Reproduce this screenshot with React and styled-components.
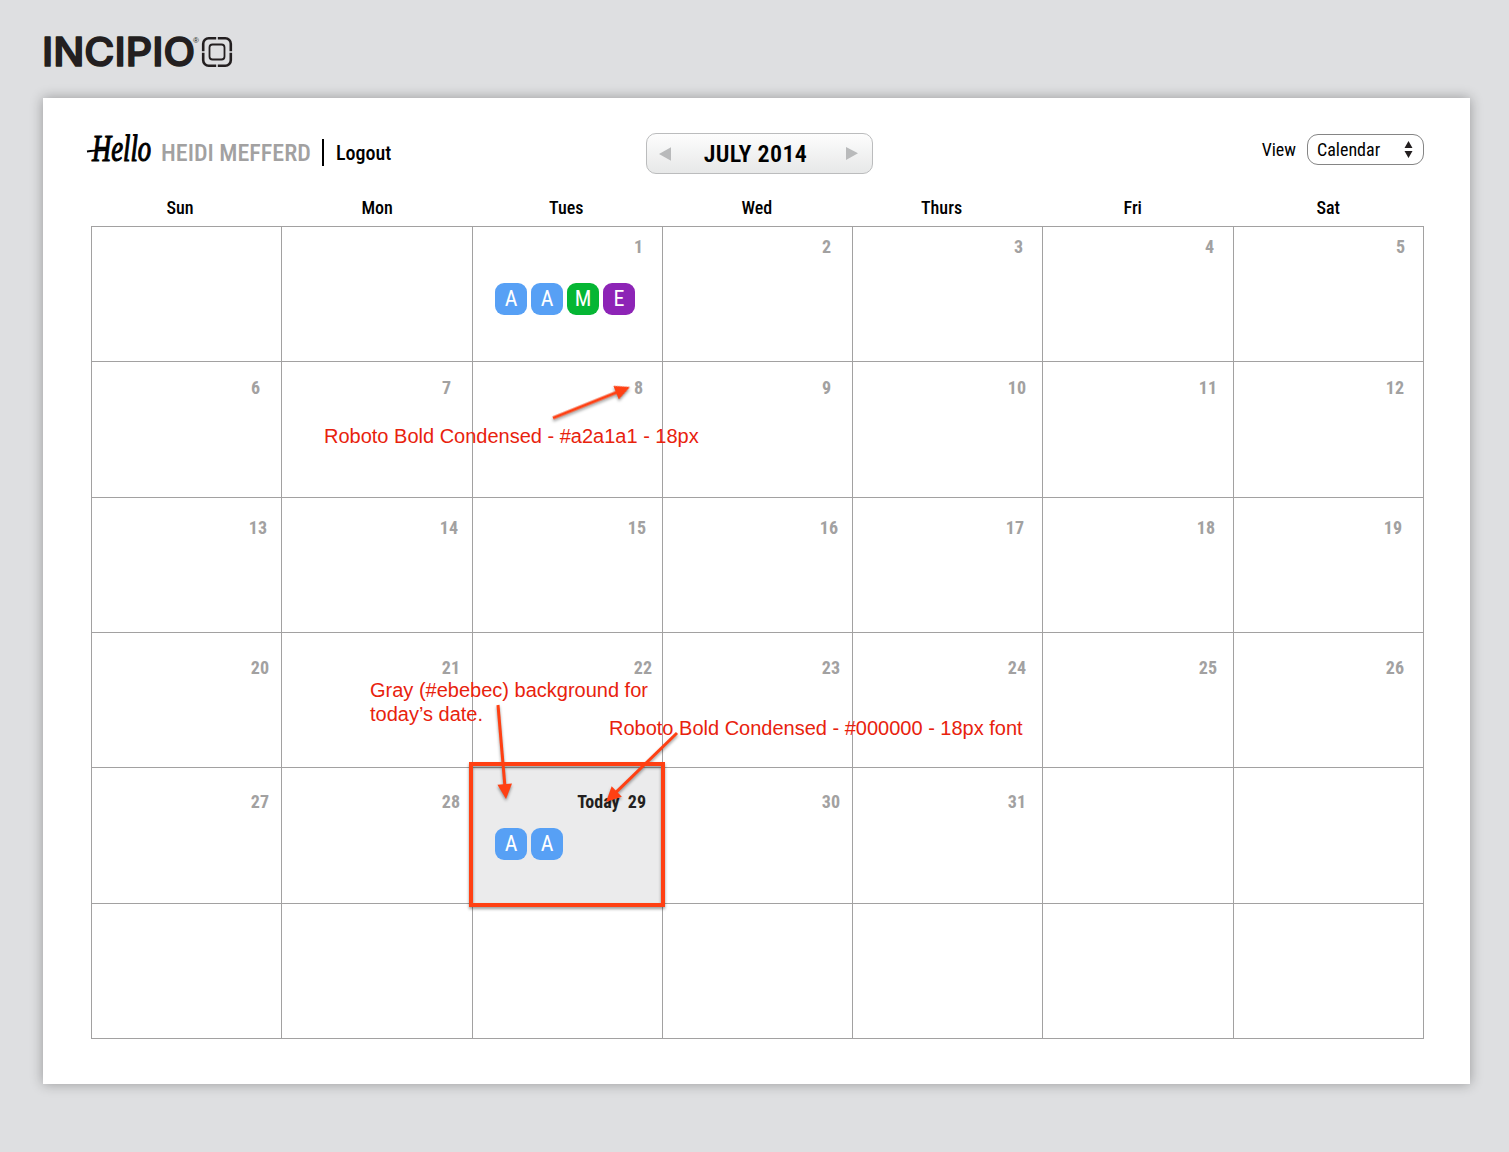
import React from 'react';
import styled, { createGlobalStyle } from 'styled-components';

const Global = createGlobalStyle`
  * { box-sizing: border-box; }
  body {
    margin: 0;
    background: #dedfe1;
    color: #000;
    font-family: "Roboto Condensed", Roboto, sans-serif;
    font-stretch: 75%;
  }
`;

const Page = styled.div`
  position: relative;
  width: 1509px;
  height: 1152px;
  padding: 36px 39px 68px 43px;
  overflow: hidden;
`;

const Brand = styled.header`
  height: 62px;
`;

const LogoMark = styled.svg`
  display: block;
  overflow: visible;
`;

const Panel = styled.main`
  width: 1427px;
  height: 986px;
  padding: 35px 46px 45px 44px;
  background: #fff;
  box-shadow: 0 0 12px rgba(0, 0, 0, 0.32);
`;

const TopBar = styled.div`
  display: grid;
  grid-template-columns: 559px 227px 1fr;
  height: 60px;
`;

const Greeting = styled.div`
  display: flex;
  align-items: flex-start;
`;

const Hello = styled.svg`
  width: 74px;
  height: 40px;
  overflow: visible;
`;

const UserName = styled.span`
  width: 161px;
  line-height: 40px;
  font-size: 24px;
  font-weight: 500;
  color: #a2a1a1;
  white-space: nowrap;
`;

const Logout = styled.a`
  height: 27px;
  margin-top: 6px;
  padding-left: 12px;
  border-left: 2px solid #000;
  font-size: 20px;
  font-weight: 500;
  line-height: 29px;
`;

const MonthPicker = styled.div`
  display: flex;
  align-items: center;
  justify-content: space-between;
  height: 41px;
  padding: 0 14px 0 12px;
  border: 1px solid #bbbcbd;
  border-radius: 10px;
  background: linear-gradient(#fdfdfd, #e7e8e8);
`;

const Month = styled.span`
  margin-right: 6px;
  font-size: 24px;
  font-weight: 600;
  letter-spacing: 0.35px;
  line-height: 30px;
  white-space: nowrap;
`;

const ViewPicker = styled.div`
  display: flex;
  justify-content: flex-end;
  padding: 1px 0 0;
  font-size: 18px;
  line-height: 31px;
`;

const Select = styled.div`
  display: flex;
  align-items: center;
  justify-content: space-between;
  width: 117px;
  height: 31px;
  margin-left: 11px;
  padding: 0 10px 0 9px;
  border: 1px solid #858585;
  border-radius: 11px;
`;

const Weekdays = styled.div`
  display: grid;
  grid-template-columns: 190px 191px 190px 190px 190px 191px 190px;
  height: 33px;
  padding-left: 5px;
`;

const Weekday = styled.div`
  padding-left: ${(p) => p.$indent}px;
  font-size: 18px;
  font-weight: 500;
  line-height: 29px;
`;

const Grid = styled.div`
  display: grid;
  grid-template-columns: 190px 191px 190px 190px 190px 191px 190px;
  grid-template-rows: 135px 136px 135px 135px 136px 135px;
  width: 1333px;
  margin-left: 4px;
  border: solid #a2a1a1;
  border-width: 1px 0 0 1px;
`;

const Cell = styled.div`
  padding: ${(p) => p.$top}px ${(p) => p.$right}px 0 22px;
  border: solid #a2a1a1;
  border-width: 0 1px 1px 0;
  background: ${(p) => (p.$today ? '#ebebec' : 'transparent')};
`;

const DayNumber = styled.div`
  height: 22px;
  font-size: 18px;
  font-weight: 700;
  line-height: 22px;
  text-align: right;
  white-space: pre;
  color: ${(p) => (p.$today ? '#231f20' : '#a2a1a1')};
`;

const Badges = styled.div`
  display: flex;
  gap: 4px;
  margin-top: ${(p) => p.$gap}px;
`;

const badgeColors = { A: '#57a0f5', M: '#05b634', E: '#8d24b6' };

const Badge = styled.span`
  width: 32px;
  height: 32px;
  border-radius: 9px;
  background: ${(p) => badgeColors[p.$kind]};
  color: #fff;
  font-size: 22px;
  line-height: 32px;
  text-align: center;
`;

const Overlay = styled.svg`
  position: absolute;
  inset: 0;
  width: 1509px;
  height: 1152px;
  pointer-events: none;
`;

const Annotations = styled.g`
  filter: drop-shadow(0 2px 1.5px rgba(0, 0, 0, 0.4));
`;

const Note = styled.p`
  position: absolute;
  left: ${(p) => p.$x}px;
  top: ${(p) => p.$y}px;
  margin: 0;
  font: 20px/24px "Liberation Sans", Arial, sans-serif;
  font-stretch: normal;
  color: #e8220d;
  white-space: pre;
`;

const days = ['Sun', 'Mon', 'Tues', 'Wed', 'Thurs', 'Fri', 'Sat'];
const indents = [74.5, 79.5, 76, 78.5, 68, 80.5, 82.5];

// Each week lists its top padding and [number, right padding] per day.
const weeks = [
  { top: 9, cells: [null, null, [1, 19], [2, 21], [3, 19], [4, 19], [5, 18]] },
  { top: 15, cells: [[6, 21], [7, 21], [8, 19], [9, 21], [10, 16], [11, 16], [12, 19]] },
  { top: 19, cells: [[13, 14], [14, 14], [15, 16], [16, 14], [17, 18], [18, 18], [19, 21]] },
  { top: 24, cells: [[20, 12], [21, 12], [22, 10], [23, 12], [24, 16], [25, 16], [26, 19]] },
  { top: 23, cells: [[27, 12], [28, 12], [29, 16], [30, 12], [31, 16], null, null] },
  { top: 0, cells: [null, null, null, null, null, null, null] },
];
const events = { 1: ['A', 'A', 'M', 'E'], 29: ['A', 'A'] };
const TODAY = 29;

function Logo() {
  return (
    <LogoMark width="190" height="32" viewBox="0 0 190 32" fill="none" stroke="#231f20">
      <text x="-1" y="30" textLength="153" lengthAdjust="spacingAndGlyphs" fill="#231f20" stroke="#231f20"
        strokeWidth="1.6" strokeLinejoin="round" fontFamily="Inter, sans-serif" fontWeight="500" fontSize="39">INCIPIO</text>
      <text x="150" y="7" fill="#231f20" stroke="none" fontFamily="Liberation Sans, sans-serif" fontSize="8">®</text>
      <rect x="160.2" y="2.2" width="27.6" height="27.6" rx="5.5" strokeWidth="2.6" />
      <rect x="166.5" y="8.5" width="15" height="15" rx="3" strokeWidth="1.8" />
      <path d="M174 0v5M174 27v5M158 16h5M185 16h5" stroke="#dedfe1" strokeWidth="1.6" />
    </LogoMark>
  );
}

function Arrow({ from, to, width = 3 }) {
  const dx = to[0] - from[0];
  const dy = to[1] - from[1];
  const length = Math.hypot(dx, dy);
  const angle = (Math.atan2(dy, dx) * 180) / Math.PI;
  return (
    <g transform={`translate(${from[0]} ${from[1]}) rotate(${angle})`}>
      <path d={`M0 0H${length - 12}`} stroke="#ff4013" strokeWidth={width} />
      <path d={`M${length} 0l-15-7.3v14.6z`} fill="#ff4013" />
    </g>
  );
}

export default function App() {
  return (
    <Page>
      <Global />
      <Brand><Logo /></Brand>
      <Panel>
        <TopBar>
          <Greeting>
            <Hello>
              <text transform="translate(5 28) scale(.72 1)" fontFamily="Liberation Serif, serif"
                fontStyle="italic" stroke="#000" strokeWidth="1.2" strokeLinejoin="round" fontSize="37">Hello</text>
              <path d="M0 18.5q6-1 20-1.5" stroke="#000" strokeWidth="1.8" fill="none" />
            </Hello>
            <UserName>HEIDI MEFFERD</UserName>
            <Logout>Logout</Logout>
          </Greeting>
          <MonthPicker>
            <svg width="12" height="14"><path d="M0 7L12 .3v13.4z" fill="#b9babb" /></svg>
            <Month>JULY 2014</Month>
            <svg width="12" height="14"><path d="M12 6.2L0 0v13z" fill="#b9babb" /></svg>
          </MonthPicker>
          <ViewPicker>
            <span>View</span>
            <Select>
              <span>Calendar</span>
              <svg width="9" height="17"><path d="M4.5 0L8.5 7h-8zM4.5 17l4-7h-8z" fill="#231f20" /></svg>
            </Select>
          </ViewPicker>
        </TopBar>
        <Weekdays>
          {days.map((d, i) => <Weekday key={d} $indent={indents[i]}>{d}</Weekday>)}
        </Weekdays>
        <Grid>
          {weeks.flatMap((week, w) => week.cells.map((day, i) => {
            if (!day) return <Cell key={`${w}-${i}`} $top={0} $right={0} />;
            const [number, right] = day;
            const today = number === TODAY;
            return (
              <Cell key={number} $top={week.top} $right={right} $today={today}>
                <DayNumber $today={today}>{today ? `Today  ${number}` : number}</DayNumber>
                {events[number] && (
                  <Badges $gap={today ? 15 : 25}>
                    {events[number].map((kind, n) => <Badge key={n} $kind={kind}>{kind}</Badge>)}
                  </Badges>
                )}
              </Cell>
            );
          }))}
        </Grid>
      </Panel>
      <Note $x={324} $y={424}>Roboto Bold Condensed - #a2a1a1 - 18px</Note>
      <Note $x={370} $y={678}>{'Gray (#ebebec) background for\ntoday’s date.'}</Note>
      <Note $x={609} $y={716}>Roboto Bold Condensed - #000000 - 18px font</Note>
      <Overlay>
        <Annotations>
          <rect x="471" y="764" width="192" height="141" fill="none" stroke="#ff4013" strokeWidth="4" />
          <Arrow from={[553, 418]} to={[630, 387]} />
          <Arrow from={[498, 705]} to={[506, 799]} />
          <Arrow from={[677, 733]} to={[606, 802]} />
        </Annotations>
      </Overlay>
    </Page>
  );
}
